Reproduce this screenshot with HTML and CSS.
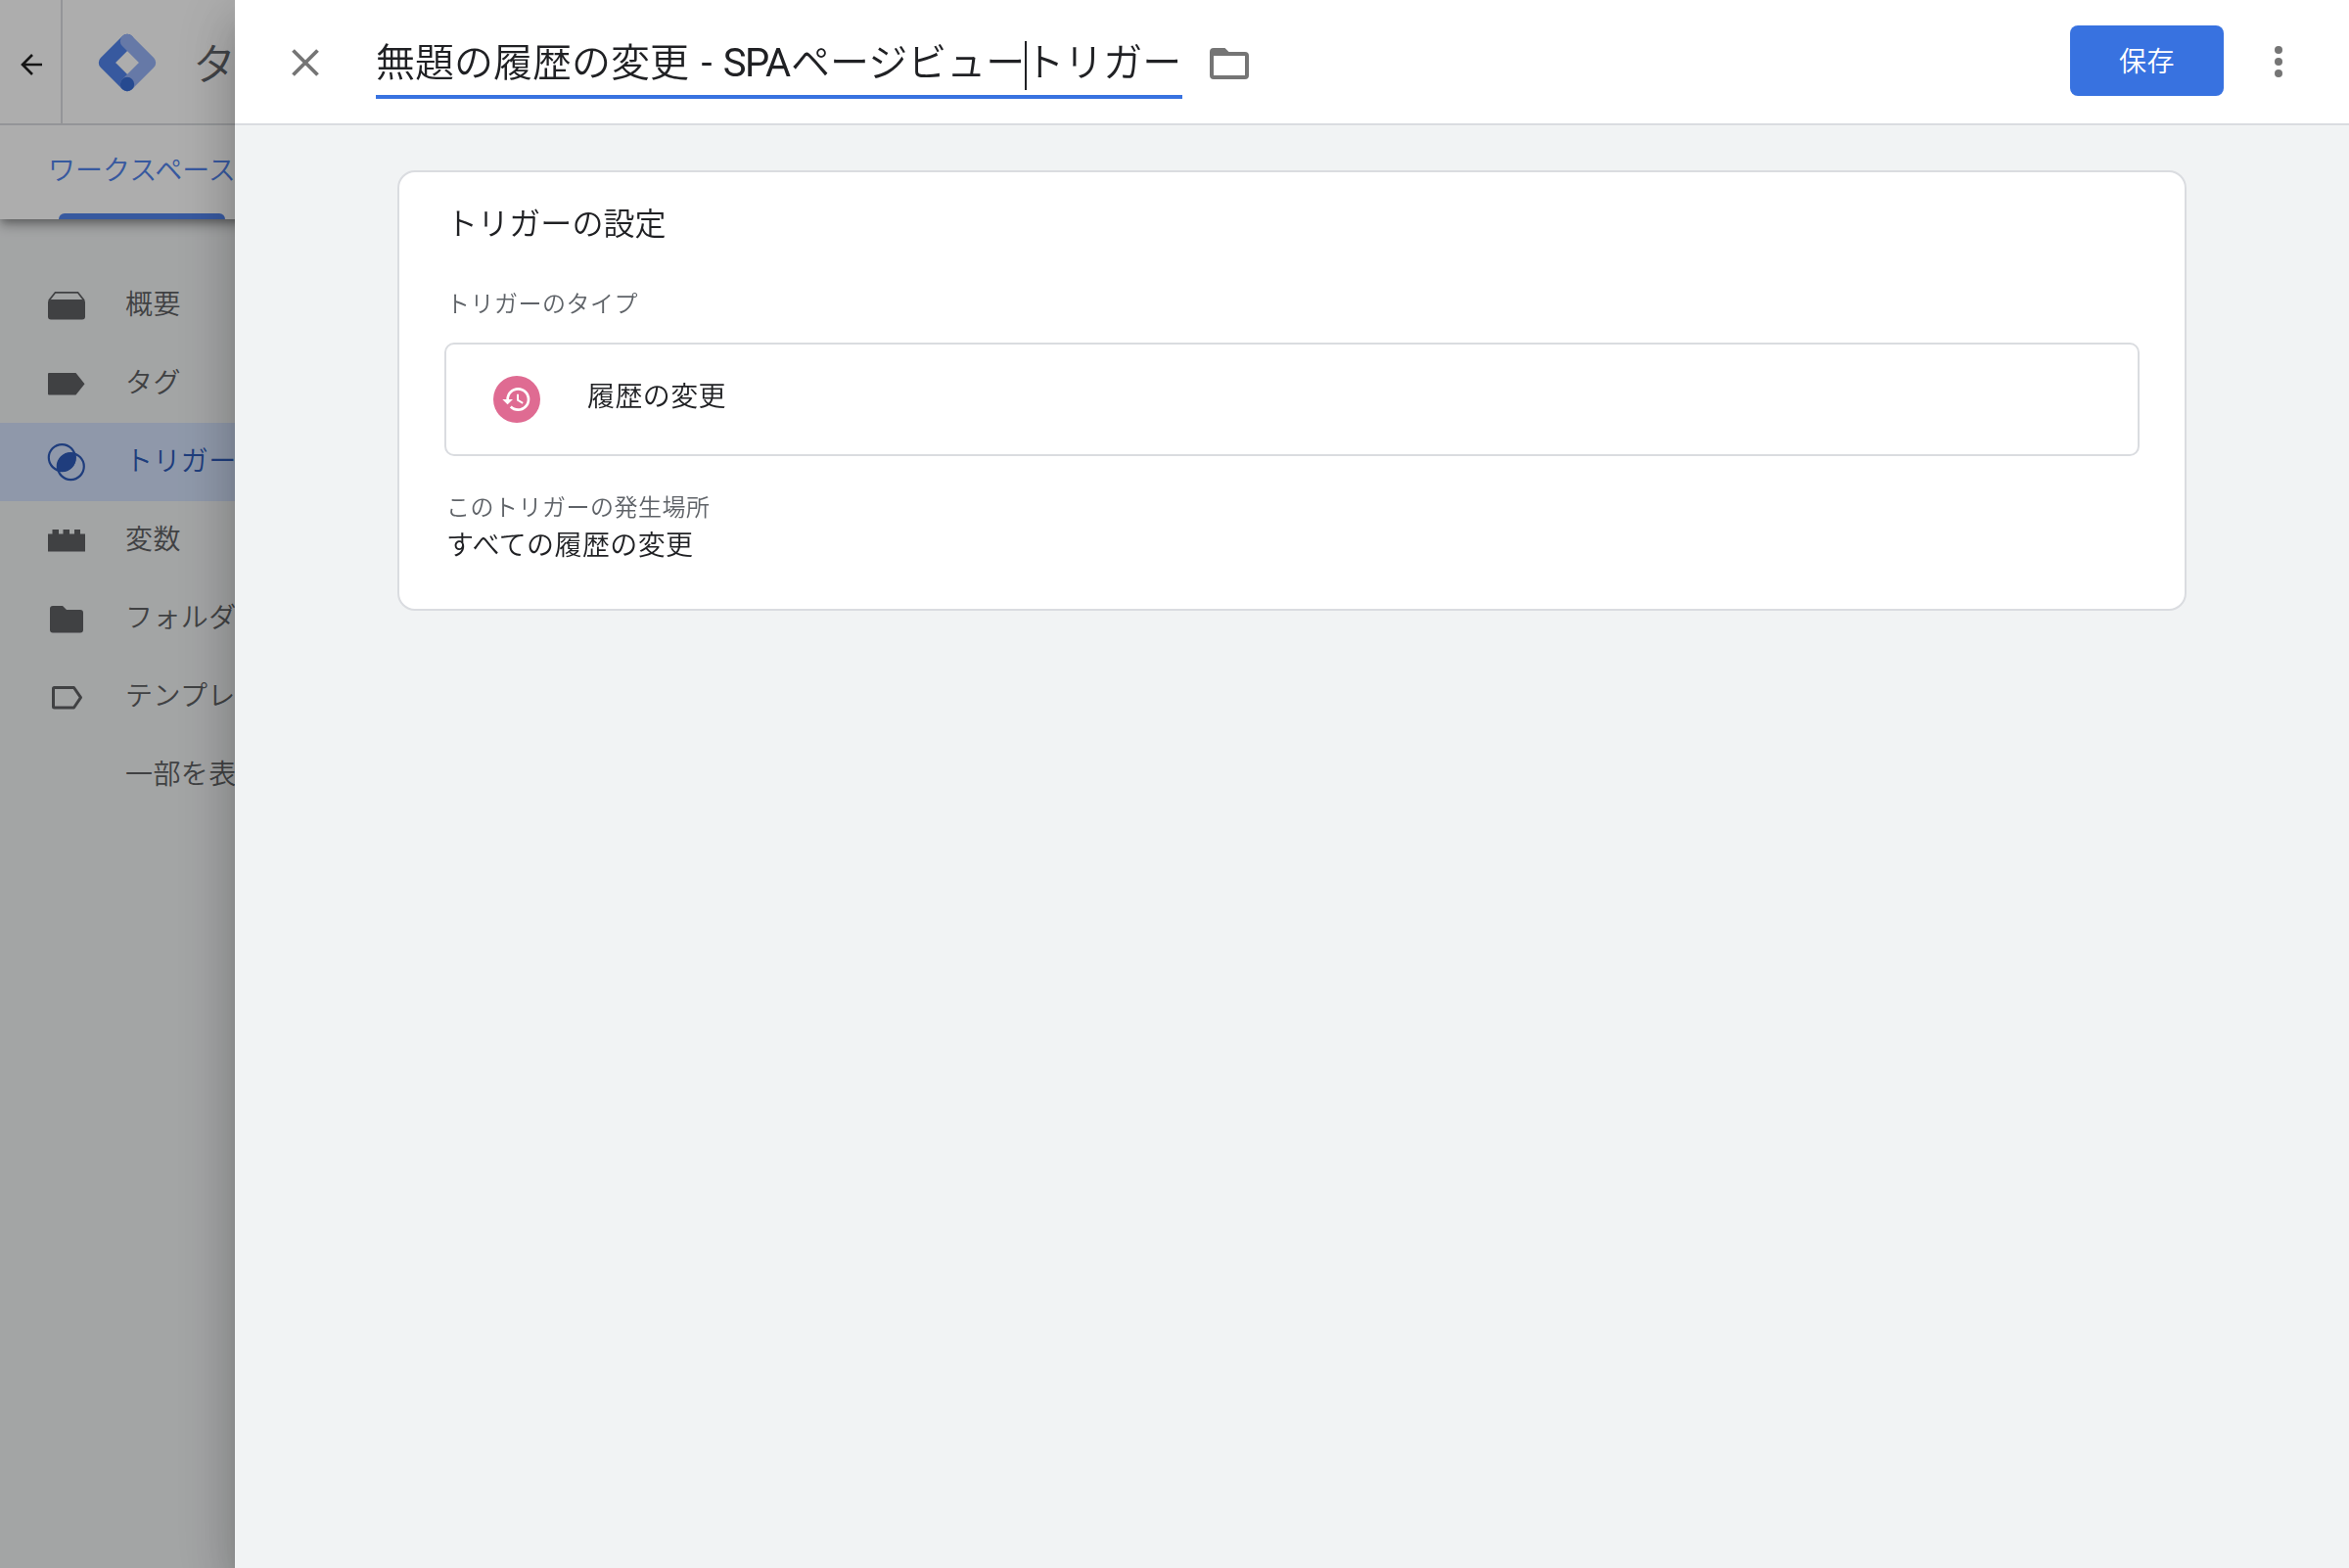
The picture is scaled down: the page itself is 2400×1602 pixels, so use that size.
FILE: index.html
```html
<!DOCTYPE html>
<html lang="ja">

<head>
  <meta charset="UTF-8">
  <meta name="viewport" content="width=device-width, initial-scale=1.0">
  <title>タグ マネージャー</title>
  <link rel="stylesheet" href="styles.css">
</head>

<body>
  <div class="page">
    <header class="header">
      <div class="topbar">
        <div class="back">
          <svg width="24" height="24" viewBox="0 0 24 24" fill="none" stroke="#1f1f1f" stroke-width="2.6">
            <path d="M23 12H3M13 2L3 12L13 22" />
          </svg>
        </div>
        <svg class="logo" width="60" height="62" viewBox="0 0 60 62" fill="none" stroke-width="14.4" stroke-linecap="round" stroke-linejoin="round">
          <path d="M30 9L8 31L30 53" stroke="#5283eb" />
          <path d="M30 9L52 31L30 53" stroke="#97b3f7" />
          <circle cx="30" cy="53" r="7.2" fill="#386dd5" />
        </svg>
        <div class="product">タグ</div>
      </div>
      <div class="tabs">
        <div class="tab">ワークスペース</div>
      </div>
    </header>

    <nav class="menu">
      <div class="item">
        <svg class="icon" viewBox="0 0 40 40">
          <path d="M2 15L8.5 6.8H31.5L38 15" fill="none" stroke="currentColor" stroke-width="1.8" />
          <rect x="1" y="14" width="38" height="20.5" rx="3" />
        </svg>
        概要
      </div>
      <div class="item">
        <svg class="icon" viewBox="0 0 40 40">
          <path d="M2 9H29.5L38.5 20.3L29.5 31.5H2Q1 31.5 1 30.5V10Q1 9 2 9Z" />
        </svg>
        タグ
      </div>
      <div class="item active">
        <svg class="icon" viewBox="0 0 40 40">
          <circle cx="15.3" cy="15.6" r="13.5" fill="none" stroke="currentColor" stroke-width="2.2" />
          <circle cx="24.3" cy="24.6" r="13.5" fill="none" stroke="currentColor" stroke-width="2.2" />
          <path d="M11.1 28.8A13.8 13.8 0 0 1 28.8 11.4A13.8 13.8 0 0 1 11.1 28.8Z" />
        </svg>
        トリガー
      </div>
      <div class="item">
        <svg class="icon" viewBox="0 0 40 40">
          <path d="M1 13.5H5.5V9H12V13.5H16.5V9H23V13.5H28V9H34V13.5H39V31.5H1Z" />
        </svg>
        変数
      </div>
      <div class="item">
        <svg class="icon" viewBox="0 0 40 40">
          <path d="M6 7H16L20 11H34Q37 11 37 14V31.5Q37 34.5 34 34.5H6Q3 34.5 3 31.5V10Q3 7 6 7Z" />
        </svg>
        フォルダ
      </div>
      <div class="item">
        <svg class="icon" viewBox="0 0 40 40">
          <path d="M7.5 10.5H27.5L34.5 20.7L27.5 31H7.5Q6.5 31 6.5 30V11.5Q6.5 10.5 7.5 10.5Z" fill="none" stroke="currentColor" stroke-width="3" stroke-linejoin="round" />
        </svg>
        テンプレート
      </div>
      <div class="item">
        <div class="icon"></div>
        一部を表示
      </div>
    </nav>
  </div>

  <div class="scrim"></div>

  <div class="sheet">
    <div class="sheet-header">
      <svg class="close" width="28" height="28" viewBox="0 0 28 28" stroke="#757575" stroke-width="3.8">
        <path d="M1.5 1.5L26.5 26.5M26.5 1.5L1.5 26.5" />
      </svg>
      <div class="name">無題の履歴の変更<span class="latin"> - SPA</span>ページビュー<span class="caret"></span>トリガー</div>
      <svg class="folder" width="40" height="32" viewBox="0 0 40 32">
        <path d="M4 0H15.5L19.5 4H36Q40 4 40 8V28Q40 32 36 32H4Q0 32 0 28V4Q0 0 4 0ZM4 8V28H36V8Z" fill="#757575" fill-rule="evenodd" />
      </svg>
      <button class="save">保存</button>
      <svg class="more" width="8" height="32" viewBox="0 0 8 32" fill="#757575">
        <circle cx="4" cy="4" r="4" />
        <circle cx="4" cy="16" r="4" />
        <circle cx="4" cy="28" r="4" />
      </svg>
    </div>

    <div class="card">
      <h2>トリガーの設定</h2>
      <div class="label">トリガーのタイプ</div>
      <div class="type">
        <div class="type-icon">
          <svg width="32" height="32" viewBox="0 0 24 24" fill="#fff">
            <path d="M13 3a9 9 0 0 0-9 9H1l3.89 3.89.07.14L9 12H6c0-3.87 3.13-7 7-7s7 3.13 7 7-3.13 7-7 7c-1.93 0-3.68-.79-4.94-2.06l-1.42 1.42A8.954 8.954 0 0 0 13 21a9 9 0 0 0 0-18zm-1 5v5l4.28 2.54.72-1.21-3.5-2.08V8H12z" />
          </svg>
        </div>
        <div class="type-name">履歴の変更</div>
      </div>
      <div class="label place">このトリガーの発生場所</div>
      <div class="value">すべての履歴の変更</div>
    </div>
  </div>
</body>

</html>
```
FILE: styles.css
```css
* {
  box-sizing: border-box;
}

body {
  margin: 0;
  height: 100vh;
  overflow: hidden;
  font-family: "Noto Sans CJK JP", sans-serif;
  font-weight: 350;
  font-size: 28px;
  line-height: 40px;
  letter-spacing: 0.4px;
  color: #202124;
  background-color: #f1f3f4;
}

.page {
  width: 100%;
  white-space: nowrap;
}

/* header behind the sheet */
.header {
  background-color: #fff;
  box-shadow: 0 4px 8px -2px rgba(0, 0, 0, 0.3), 0 8px 10px rgba(0, 0, 0, 0.14), 0 2px 20px rgba(0, 0, 0, 0.12);
}

.topbar {
  display: flex;
  align-items: center;
  height: 128px;
  border-bottom: 2px solid #dadce0;
}

.back {
  display: flex;
  align-items: center;
  justify-content: center;
  width: 64px;
  height: 100%;
  padding: 6px 0 0 2px;
  border-right: 2px solid #dadce0;
}

.logo {
  margin-left: 36px;
  margin-top: 2px;
}

.product {
  margin-left: 37px;
  font-size: 44px;
  line-height: 64px;
  color: #5f6368;
}

.tabs {
  height: 96px;
  padding-left: 49px;
}

.tab {
  position: relative;
  width: 194px;
  height: 96px;
  line-height: 89px;
  letter-spacing: 0;
  color: #5283eb;
}

.tab::after {
  content: "";
  position: absolute;
  left: 11px;
  bottom: 0;
  width: 170px;
  height: 6px;
  border-radius: 6px 6px 0 0;
  background-color: #5283eb;
}

.menu {
  padding-top: 48px;
}

.item {
  display: flex;
  align-items: center;
  gap: 40px;
  height: 80px;
  padding: 0 0 6px 48px;
  color: #5f6163;
}

.item.active {
  color: #2e5bb8;
  background-color: #d3e1fb;
}

.icon {
  width: 40px;
  height: 40px;
  margin-top: 6px;
  fill: currentColor;
}

.scrim {
  position: fixed;
  inset: 0;
  background-color: rgba(0, 0, 0, 0.32);
}

/* trigger editor */
.sheet {
  position: fixed;
  inset: 0 0 0 240px;
  background-color: #f1f3f4;
  box-shadow: 0 16px 20px -10px rgba(0, 0, 0, 0.2), 0 32px 48px 4px rgba(0, 0, 0, 0.14), 0 12px 60px 10px rgba(0, 0, 0, 0.12);
}

.sheet-header {
  display: flex;
  align-items: flex-start;
  height: 128px;
  padding: 0 68px 0 58px;
  border-bottom: 2px solid #dadce0;
  background-color: #fff;
}

.close {
  margin-top: 50px;
}

.name {
  width: 824px;
  height: 101px;
  margin-left: 58px;
  padding-top: 31px;
  border-bottom: 4px solid #3872e0;
  font-size: 40px;
  line-height: 60px;
  letter-spacing: 0;
  white-space: nowrap;
}

.latin {
  display: inline-block;
  width: 104px;
  font-family: Roboto, sans-serif;
  font-weight: 400;
  letter-spacing: -1.5px;
  word-spacing: 4.2px;
  white-space: pre;
}

.caret {
  display: inline-block;
  width: 2px;
  height: 50px;
  margin: 0 -2px 0 0;
  vertical-align: middle;
  background-color: #202124;
}

.folder {
  margin: 49px 0 0 28px;
}

.save {
  width: 157px;
  height: 72px;
  margin: 26px 0 0 auto;
  padding: 0 0 2px;
  border: 0;
  border-radius: 8px;
  background-color: #3872e0;
  color: #fff;
  font: inherit;
  letter-spacing: 0.4px;
}

.more {
  margin: 47px 0 0 52px;
}

.card {
  width: 1828px;
  height: 450px;
  margin: 46px 0 0 166px;
  padding: 26px 46px 0;
  border: 2px solid #dadce0;
  border-radius: 18px;
  background-color: #fff;
}

h2 {
  margin: 0;
  padding-left: 2px;
  font-size: 32px;
  font-weight: 350;
  line-height: 48px;
  letter-spacing: 0.1px;
}

.label {
  margin-top: 43px;
  padding-left: 2px;
  font-size: 24px;
  line-height: 32px;
  letter-spacing: 0.5px;
  color: #5f6368;
}

.type {
  display: flex;
  align-items: center;
  gap: 48px;
  height: 116px;
  margin-top: 25px;
  padding-left: 48px;
  border: 2px solid #dadce0;
  border-radius: 10px;
}

.type-name {
  margin-bottom: 11px;
}

.type-icon {
  display: flex;
  align-items: center;
  justify-content: center;
  width: 48px;
  height: 48px;
  border-radius: 50%;
  background-color: #df6b92;
}

.place {
  margin-top: 35px;
}

.value {
  margin-top: 4px;
  padding-left: 2px;
  line-height: 36px;
}
```
